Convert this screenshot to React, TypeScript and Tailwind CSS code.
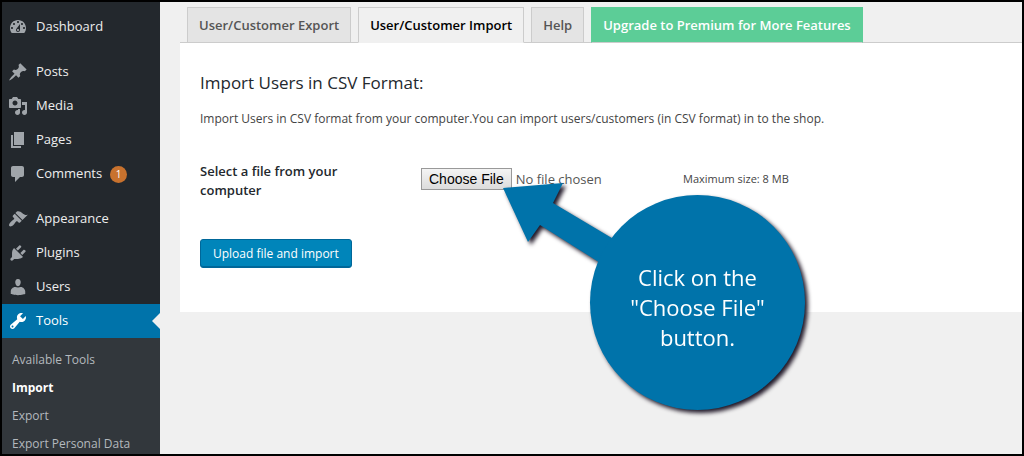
import clsx from 'clsx';

interface MenuItem {
  label: string;
  icon: string;
  count?: number;
  current?: boolean;
}

// 20x20 admin menu glyphs
const icons: Record<string, string> = {
  dashboard:
    'M3.76 16h12.48c1.1-1.37 1.76-3.11 1.76-5 0-4.42-3.58-8-8-8s-8 3.58-8 8c0 1.89.66 3.63 1.76 5zM10 4c.55 0 1 .45 1 1s-.45 1-1 1-1-.45-1-1 .45-1 1-1zM6 6c.55 0 1 .45 1 1s-.45 1-1 1-1-.45-1-1 .45-1 1-1zm8 0c.55 0 1 .45 1 1s-.45 1-1 1-1-.45-1-1 .45-1 1-1zm-5.37 5.55L12 7v6c0 1.1-.9 2-2 2s-2-.9-2-2c0-.57.24-1.08.63-1.45zM4 10c.55 0 1 .45 1 1s-.45 1-1 1-1-.45-1-1 .45-1 1-1zm12 0c.55 0 1 .45 1 1s-.45 1-1 1-1-.45-1-1 .45-1 1-1zm-5 3c0-.55-.45-1-1-1s-1 .45-1 1 .45 1 1 1 1-.45 1-1z',
  posts:
    'M10.44 3.02l1.82-1.82 6.36 6.35-1.83 1.82c-1.05-.68-2.48-.57-3.41.36l-.75.75c-.92.93-1.04 2.35-.35 3.41l-1.83 1.82-2.41-2.41-2.8 2.79c-.42.42-3.38 2.71-3.8 2.29s1.86-3.39 2.28-3.81l2.79-2.79L4.1 9.36l1.83-1.82c1.05.69 2.48.57 3.4-.36l.75-.75c.93-.92 1.05-2.35.36-3.41z',
  media:
    'M13 11V4c0-.55-.45-1-1-1h-1.67L9 1H5L3.67 3H2c-.55 0-1 .45-1 1v7c0 .55.45 1 1 1h10c.55 0 1-.45 1-1zM7 4.5c1.38 0 2.5 1.12 2.5 2.5S8.38 9.5 7 9.5 4.5 8.38 4.5 7 5.62 4.5 7 4.5zM14 6h5v10.5c0 1.38-1.12 2.5-2.5 2.5S14 17.88 14 16.5s1.12-2.5 2.5-2.5c.17 0 .34.02.5.05V9h-3V6zm-4 8.05V13h2v3.5c0 1.38-1.12 2.5-2.5 2.5S7 17.88 7 16.5 8.12 14 9.5 14c.17 0 .34.02.5.05z',
  pages: 'M6 15V2h10v13H6zm-1 1h8v2H3V5h2v11z',
  comments: 'M5 2h9c1.1 0 2 .9 2 2v7c0 1.1-.9 2-2 2h-2l-5 5v-5H5c-1.1 0-2-.9-2-2V4c0-1.1.9-2 2-2z',
  appearance:
    'M14.48 11.06L7.41 3.99l1.5-1.5c.5-.56 2.3-.47 3.51.32 1.21.8 1.43 1.28 2.91 2.1 1.18.64 2.45 1.26 4.45.85zm-.71.71L6.7 4.7 4.93 6.47c-.39.39-.39 1.02 0 1.41l1.06 1.06c.39.39.39 1.03 0 1.42-.6.6-1.43 1.11-2.21 1.69-.35.26-.7.53-1.01.84C1.43 14.23.4 16.08 1.4 17.07c.99 1 2.84-.03 4.18-1.36.31-.31.58-.66.85-1.02.57-.78 1.08-1.61 1.69-2.21.39-.39 1.02-.39 1.41 0l1.06 1.06c.39.39 1.02.39 1.41 0z',
  plugins:
    'M13.11 4.36L9.87 7.6 8 5.73l3.24-3.24c.35-.34 1.05-.2 1.56.32.52.51.66 1.21.31 1.55zm-8 1.77l.91-1.12 9.01 9.01-1.19.84c-.71.71-2.63 1.16-3.82 1.16H6.14L4.9 17.26c-.59.59-1.54.59-2.12 0-.59-.58-.59-1.53 0-2.12l1.24-1.24v-3.88c0-1.13.4-3.19 1.09-3.89zm7.26 3.97l3.24-3.24c.34-.35 1.04-.21 1.55.31.52.51.66 1.21.31 1.55l-3.24 3.25z',
  users:
    'M10 9.25c-2.27 0-2.73-3.44-2.73-3.44C7 4.02 7.82 2 9.97 2c2.16 0 2.98 2.02 2.71 3.81 0 0-.41 3.44-2.68 3.44zM7.23 10L10 10.6 12.72 10c2.39 0 4.52 2.33 4.52 4.53v2.49s-3.65 1.13-7.24 1.13c-3.65 0-7.24-1.13-7.24-1.13v-2.49c0-2.25 1.94-4.53 4.47-4.53z',
  tools:
    'M16.68 9.77c-1.34 1.34-3.3 1.67-4.95.99l-5.41 6.52c-.99.99-2.59.99-3.58 0s-.99-2.59 0-3.57l6.52-5.42c-.68-1.65-.35-3.61.99-4.95 1.28-1.28 3.12-1.62 4.72-1.06l-2.89 2.89 2.82 2.82 2.86-2.87c.53 1.58.18 3.39-1.08 4.65zM3.81 16.21c.4.39 1.04.39 1.43 0 .4-.4.4-1.04 0-1.43-.39-.4-1.03-.4-1.43 0-.39.39-.39 1.03 0 1.43z',
};

const menuGroups: MenuItem[][] = [
  [{ label: 'Dashboard', icon: 'dashboard' }],
  [
    { label: 'Posts', icon: 'posts' },
    { label: 'Media', icon: 'media' },
    { label: 'Pages', icon: 'pages' },
    { label: 'Comments', icon: 'comments', count: 1 },
  ],
  [
    { label: 'Appearance', icon: 'appearance' },
    { label: 'Plugins', icon: 'plugins' },
    { label: 'Users', icon: 'users' },
    { label: 'Tools', icon: 'tools', current: true },
  ],
];

const toolLinks = ['Available Tools', 'Import', 'Export', 'Export Personal Data'];

const tabs = [
  { label: 'User/Customer Export', style: 'border-[#ccc] bg-[#e4e4e4] text-[#555]' },
  { label: 'User/Customer Import', style: 'border-[#ccc] border-b-[#f0f0f0] bg-[#f0f0f0] text-black' },
  { label: 'Help', style: 'border-[#ccc] bg-[#e4e4e4] text-[#555]' },
  { label: 'Upgrade to Premium for More Features', style: 'border-[#5ccd97] border-b-[#ccc] bg-[#5ccd97] text-white' },
];

function MenuLink({ label, icon, count, current }: MenuItem) {
  return (
    <a
      href="#"
      className={clsx(
        'relative flex h-[34px] items-center gap-2 pl-1.5 text-[13px]',
        current ? 'bg-[#0073aa] text-white' : 'text-[#eee]',
      )}
    >
      <svg
        viewBox="0 0 20 20"
        className={clsx('size-5 shrink-0', current ? 'fill-white' : 'fill-[#a0a5aa]')}
        aria-hidden="true"
      >
        <path d={icons[icon]} fillRule="evenodd" />
      </svg>
      <span>{label}</span>
      {count && (
        <span className="flex size-[17px] items-center justify-center rounded-full bg-[#c8722e] text-[10px] text-white">
          {count}
        </span>
      )}
      {current && (
        <span className="absolute top-1/2 right-0 -translate-y-1/2 border-y-8 border-r-8 border-y-transparent border-r-[#f0f0f0]" />
      )}
    </a>
  );
}

function Sidebar() {
  return (
    <nav className="w-[158px] shrink-0 overflow-hidden bg-[#23282d] pt-2">
      <div className="flex flex-col gap-[11px]">
        {menuGroups.map((group, index) => (
          <div key={index}>
            {group.map((item) => (
              <MenuLink key={item.label} {...item} />
            ))}
          </div>
        ))}
      </div>
      <ul className="bg-[#32373c] pt-2 text-xs">
        {toolLinks.map((label) => (
          <li key={label}>
            <a
              href="#"
              className={clsx(
                'flex h-7 items-center pl-2.5 whitespace-nowrap',
                label === 'Import' ? 'font-bold text-white' : 'text-[#b4b9be]',
              )}
            >
              {label}
            </a>
          </li>
        ))}
      </ul>
    </nav>
  );
}

function Callout() {
  return (
    <div className="pointer-events-none absolute top-[140px] left-[323px] h-[227px] w-[302px] drop-shadow-[3px_3px_2px_#201828]">
      <svg viewBox="0 0 302 227" className="absolute inset-0 fill-[#0073aa]" aria-hidden="true">
        <path d="M0 5L60 0L50 20L124 64L110 88L37 42L25 59Z" />
      </svg>
      <div className="absolute right-0 bottom-0 flex size-[215px] items-center justify-center rounded-full bg-[#0073aa] pt-2 text-center text-[22px] leading-[30px] text-white">
        <p>
          Click on the
          <br />
          "Choose File"
          <br />
          button.
        </p>
      </div>
    </div>
  );
}

export default function App() {
  return (
    <div className="flex h-screen overflow-hidden border-2 border-black bg-[#f0f0f0] font-['Open_Sans',sans-serif]">
      <Sidebar />
      <main className="min-w-0 flex-1 pt-[5px] pl-5">
        <div className="flex gap-[7px] border-b border-[#ccc] pl-[7px]">
          {tabs.map(({ label, style }) => (
            <a
              key={label}
              href="#"
              className={clsx('-mb-px border px-[11px] py-1.5 text-[13px] leading-[22px] font-semibold whitespace-nowrap', style)}
            >
              {label}
            </a>
          ))}
        </div>

        <form className="relative bg-white px-5 pt-7 pb-11 text-[#444]" onSubmit={(e) => e.preventDefault()}>
          <h2 className="text-[17px] leading-6 text-[#23282d]">Import Users in CSV Format:</h2>
          <p className="mt-3 text-xs leading-6">
            Import Users in CSV format from your computer.You can import users/customers (in CSV format) in to the shop.
          </p>

          <div className="mt-[31px] grid grid-cols-[221px_262px_1fr] items-start">
            <label htmlFor="import-file" className="max-w-[170px] text-[13px] leading-[19px] font-semibold text-[#23282d]">
              Select a file from your computer
            </label>
            <input
              id="import-file"
              type="file"
              className="mt-[6px] h-[22px] text-[13px] text-[#555] file:mr-1 file:h-[22px] file:border file:border-solid file:border-[#999] file:bg-linear-to-b file:from-[#f4f4f4] file:to-[#dcdcdc] file:px-[7px] file:font-['Liberation_Sans',sans-serif] file:text-sm file:leading-5 file:text-black"
            />
            <small className="mt-[6px] text-[11px] leading-[22px]">Maximum size: 8 MB</small>
          </div>

          <button
            type="submit"
            className="mt-[39px] h-[29px] rounded-[3px] border border-[#006799] bg-[#0085ba] px-3 text-xs text-white shadow-[inset_0_-1px_0_#006799]"
          >
            Upload file and import
          </button>

          <Callout />
        </form>
      </main>
    </div>
  );
}
